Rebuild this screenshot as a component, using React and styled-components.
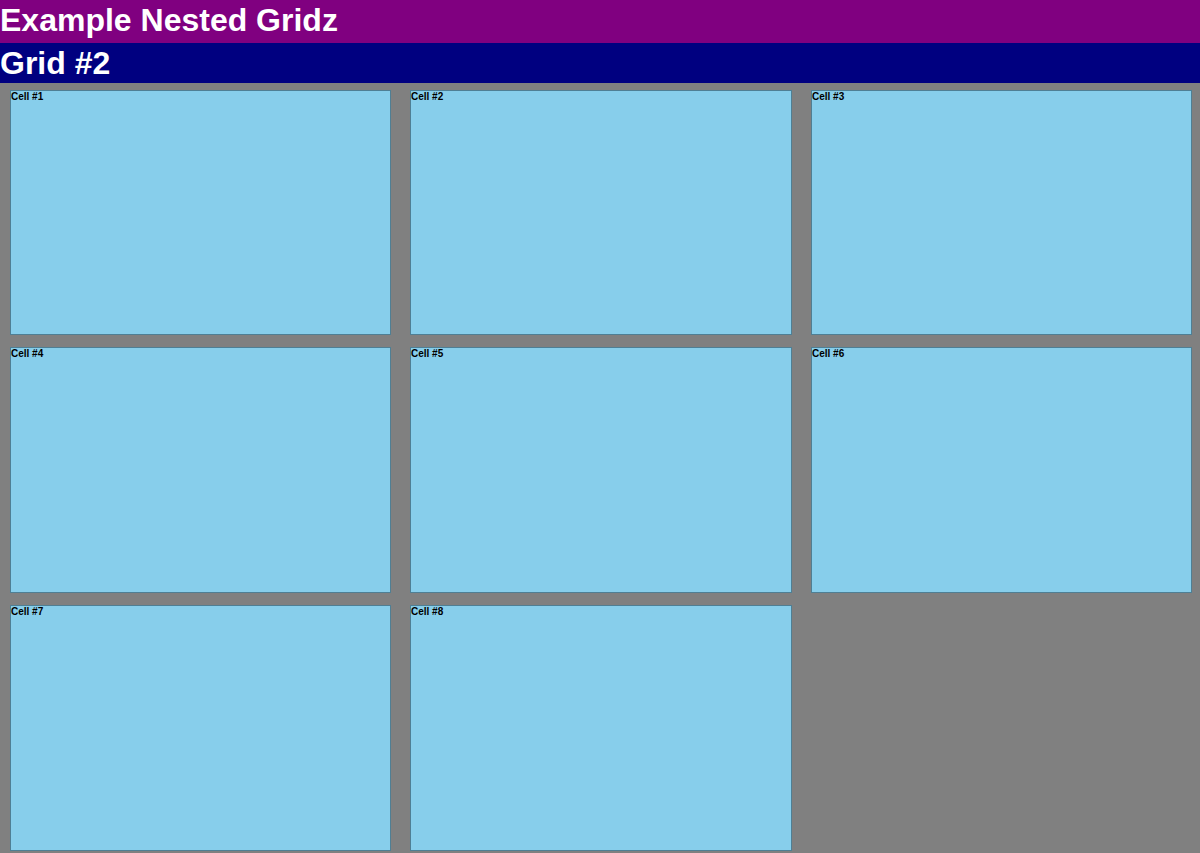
import styled, { createGlobalStyle } from "styled-components";

const GlobalStyle = createGlobalStyle`
  html, body {
    margin: 0;
    padding: 0;
    background: #808080;
    font-family: "Liberation Sans", Arial, Helvetica, sans-serif;
  }
`;

const cells = [1, 2, 3, 4, 5, 6, 7, 8];

const App = () => {
  return (
    <Page>
      <GlobalStyle />
      <Header>Example Nested Gridz</Header>
      <SubHeader>Grid #2</SubHeader>
      <Grid>
        {cells.map((n) => (
          <Cell key={n}>Cell #{n}</Cell>
        ))}
      </Grid>
    </Page>
  );
};

export default App;

const Page = styled.div`
  width: 1200px;
  height: 853px;
  background: #808080;
  display: flex;
  flex-direction: column;
  overflow: hidden;
`;

const Header = styled.h1`
  margin: 0;
  height: 43px;
  background: #800080;
  color: white;
  font-size: 32px;
  font-weight: bold;
  line-height: 40px;
`;

const SubHeader = styled.h2`
  margin: 0;
  height: 40px;
  background: #000080;
  color: white;
  font-size: 32px;
  font-weight: bold;
  line-height: 40px;
`;

const Grid = styled.div`
  display: grid;
  grid-template-columns: 381px 382px 381px;
  grid-template-rows: 245px 246px 246px;
  column-gap: 19px;
  row-gap: 12px;
  padding: 7px 0 0 10px;
`;

const Cell = styled.div`
  background: #87ceeb;
  border: 1px solid #4f7f94;
  font-size: 10px;
  font-weight: bold;
  line-height: 12px;
  color: black;
`;
